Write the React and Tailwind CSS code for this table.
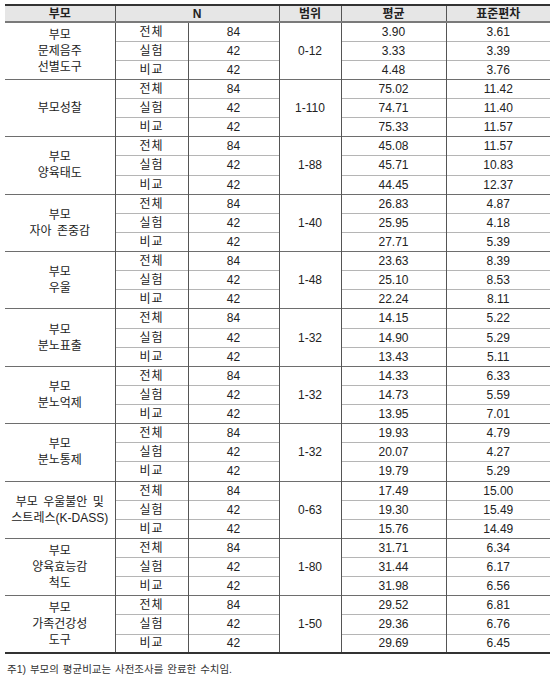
import React from 'react'

const groups = [
  { label: ['부모', '문제음주', '선별도구'], range: '0-12', rows: [['3.90', '3.61'], ['3.33', '3.39'], ['4.48', '3.76']] },
  { label: ['부모성찰'], range: '1-110', rows: [['75.02', '11.42'], ['74.71', '11.40'], ['75.33', '11.57']] },
  { label: ['부모', '양육태도'], range: '1-88', rows: [['45.08', '11.57'], ['45.71', '10.83'], ['44.45', '12.37']] },
  { label: ['부모', '자아 존중감'], range: '1-40', rows: [['26.83', '4.87'], ['25.95', '4.18'], ['27.71', '5.39']] },
  { label: ['부모', '우울'], range: '1-48', rows: [['23.63', '8.39'], ['25.10', '8.53'], ['22.24', '8.11']] },
  { label: ['부모', '분노표출'], range: '1-32', rows: [['14.15', '5.22'], ['14.90', '5.29'], ['13.43', '5.11']] },
  { label: ['부모', '분노억제'], range: '1-32', rows: [['14.33', '6.33'], ['14.73', '5.59'], ['13.95', '7.01']] },
  { label: ['부모', '분노통제'], range: '1-32', rows: [['19.93', '4.79'], ['20.07', '4.27'], ['19.79', '5.29']] },
  { label: ['부모 우울불안 및', '스트레스(K-DASS)'], range: '0-63', rows: [['17.49', '15.00'], ['19.30', '15.49'], ['15.76', '14.49']] },
  { label: ['부모', '양육효능감', '척도'], range: '1-80', rows: [['31.71', '6.34'], ['31.44', '6.17'], ['31.98', '6.56']] },
  { label: ['부모', '가족건강성', '도구'], range: '1-50', rows: [['29.52', '6.81'], ['29.36', '6.76'], ['29.69', '6.45']] },
]

const kinds = [['전체', '84'], ['실험', '42'], ['비교', '42']]

const App = () => {
  return (
    <div className="w-[560px] h-[678px] bg-white pt-[4px] pl-[5px] text-[#222] font-['Liberation_Sans','Noto_Sans_CJK_KR',sans-serif]">
      <table className="w-[545px] table-fixed border-collapse text-[12px] text-center">
        <colgroup>
          <col className="w-[110px]" />
          <col className="w-[73px]" />
          <col className="w-[91px]" />
          <col className="w-[62px]" />
          <col className="w-[105px]" />
          <col className="w-[104px]" />
        </colgroup>
        <thead>
          <tr className="h-[17px] bg-[#e6e6e6] font-bold leading-[14px]">
            <th className="border-t-2 border-b-2 border-r border-t-[#333] border-b-[#7a7a7a] border-r-[#555]">부모</th>
            <th colSpan={2} className="border-t-2 border-b-2 border-r border-t-[#333] border-b-[#7a7a7a] border-r-[#555]">N</th>
            <th className="border-t-2 border-b-2 border-r border-t-[#333] border-b-[#7a7a7a] border-r-[#555]">범위</th>
            <th className="border-t-2 border-b-2 border-r border-t-[#333] border-b-[#7a7a7a] border-r-[#555]">평균</th>
            <th className="border-t-2 border-b-2 border-t-[#333] border-b-[#7a7a7a]">표준편차</th>
          </tr>
        </thead>
        <tbody>
          {groups.map((g, gi) =>
            g.rows.map((r, ri) => {
              const top = ri === 0 ? 'border-t border-t-[#6e6e6e]' : 'border-t border-t-[#b5b5b5]'
              const end = gi === groups.length - 1
              const last = end && ri === 2 ? 'border-b-2 border-b-[#333]' : ''
              return (
                <tr key={gi + '-' + ri} className="h-[19.13px] leading-[16px]">
                  {ri === 0 && (
                    <td rowSpan={3} className={`border-t border-t-[#6e6e6e] border-r border-r-[#555] ${end ? 'border-b-2 border-b-[#333]' : ''} whitespace-pre [word-spacing:2px]`}>
                      {g.label.map((l, li) => (
                        <div key={li}>{l}</div>
                      ))}
                    </td>
                  )}
                  <td className={`${top} ${last} border-r border-r-[#555] tracking-[1px]`}>{kinds[ri][0]}</td>
                  <td className={`${top} ${last} border-r border-r-[#555]`}>{kinds[ri][1]}</td>
                  {ri === 0 && (
                    <td rowSpan={3} className={`border-t border-t-[#6e6e6e] border-r border-r-[#555] ${end ? 'border-b-2 border-b-[#333]' : ''}`}>{g.range}</td>
                  )}
                  <td className={`${top} ${last} border-r border-r-[#555]`}>{r[0]}</td>
                  <td className={`${top} ${last}`}>{r[1]}</td>
                </tr>
              )
            })
          )}
        </tbody>
      </table>
      <p className="mt-[8px] pl-[2px] text-[10.5px] text-[#333] leading-[14px] [word-spacing:1px]">주1) 부모의 평균비교는 사전조사를 완료한 수치임.</p>
    </div>
  )
}

export default App
